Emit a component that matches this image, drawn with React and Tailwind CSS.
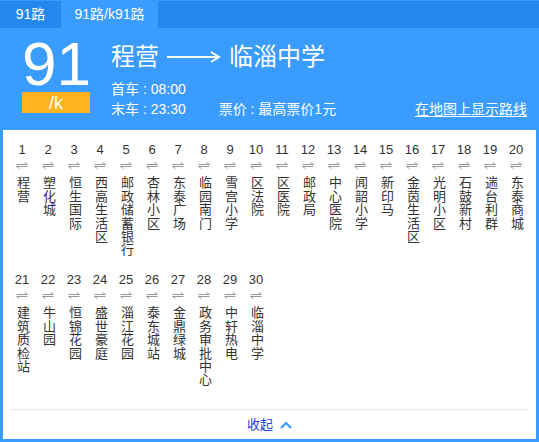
import React from "react";

const stations = [
  "程营", "塑化城", "恒生国际", "西高生活区", "邮政储蓄银行", "杏林小区", "东泰广场", "临园南门", "雪宫小学", "区法院",
  "区医院", "邮政局", "中心医院", "闻韶小学", "新印马", "金茵生活区", "光明小区", "石鼓新村", "遄台利群", "东泰商城",
  "建筑质检站", "牛山园", "恒锦花园", "盛世豪庭", "淄江花园", "泰东城站", "金鼎绿城", "政务审批中心", "中轩热电", "临淄中学",
];

function Swap() {
  return (
    <svg width="12" height="7" viewBox="0 0 12 7" className="block mx-auto">
      <path d="M0.5 2.5H11.5L8.5 0.5" fill="none" stroke="#999" strokeWidth="1" />
      <path d="M11.5 4.5H0.5L3.5 6.5" fill="none" stroke="#999" strokeWidth="1" />
    </svg>
  );
}

function Station({ num, name }) {
  return (
    <div className="w-[26px] flex flex-col items-center text-[#333]">
      <div className="text-[13px] leading-[16px]">{num}</div>
      <div className="mt-[4px] h-[7px]">
        <Swap />
      </div>
      <div className="mt-[7px] [writing-mode:vertical-lr] text-[13px] leading-[16px] tracking-[0.4px]">
        {name}
      </div>
    </div>
  );
}

export default function App() {
  return (
    <div
      className="w-[539px] h-[442px] bg-white flex flex-col overflow-hidden"
      style={{ fontFamily: '"Liberation Sans", "Noto Sans CJK SC", sans-serif' }}
    >
      {/* tabs */}
      <div className="h-[28px] bg-[#2489ef] border-t border-[#3a9cff] flex text-white text-[14px]">
        <div className="w-[61px] flex items-center justify-center">91路</div>
        <div className="w-[97px] flex items-center justify-center bg-[#3a9cff]">91路/k91路</div>
      </div>

      <div className="flex-1 flex flex-col border-x-[3px] border-b-[3px] border-[#3a9cff]">
        {/* header */}
        <div className="h-[102px] bg-[#3a9cff] flex text-white">
          <div className="ml-[19px] w-[68px] flex flex-col">
            <div className="text-[62px] leading-[57px] mt-[7px]">91</div>
            <div className="h-[21px] bg-[#ffb320] flex items-center justify-center text-[18px] leading-none">
              /k
            </div>
          </div>
          <div className="ml-[21px] flex-1 flex flex-col pr-[9px]">
            <div className="mt-[14px] flex items-center text-[24px] leading-[30px]">
              <span>程营</span>
              <svg width="54" height="14" viewBox="0 0 54 14" className="mx-[8px]">
                <path d="M0 7H51" stroke="#fff" strokeWidth="2" />
                <path d="M44 2L52 7L44 12" fill="none" stroke="#fff" strokeWidth="2" />
              </svg>
              <span>临淄中学</span>
            </div>
            <div className="mt-[7px] text-[14px] leading-[20px]">首车 : 08:00</div>
            <div className="flex text-[14px] leading-[20px]">
              <span>末车 : 23:30</span>
              <span className="ml-[33px]">票价 : 最高票价1元</span>
              <span className="ml-auto underline underline-offset-2">在地图上显示路线</span>
            </div>
          </div>
        </div>

        {/* stations */}
        <div className="pl-[6px] pt-[12px] flex flex-wrap w-[532px] gap-y-[16px] items-start">
          {stations.map((s, i) => (
            <Station key={i} num={i + 1} name={s} />
          ))}
        </div>

        <div className="mt-auto mx-[7px] border-t border-[#e8e8e8] h-[30px] flex items-center justify-center gap-[7px]">
          <span className="text-[13px] text-[#2440cc]">收起</span>
          <svg width="12" height="8" viewBox="0 0 12 8">
            <path d="M1 7L6 2L11 7" fill="none" stroke="#3a9cff" strokeWidth="2.2" />
          </svg>
        </div>
      </div>
    </div>
  );
}
